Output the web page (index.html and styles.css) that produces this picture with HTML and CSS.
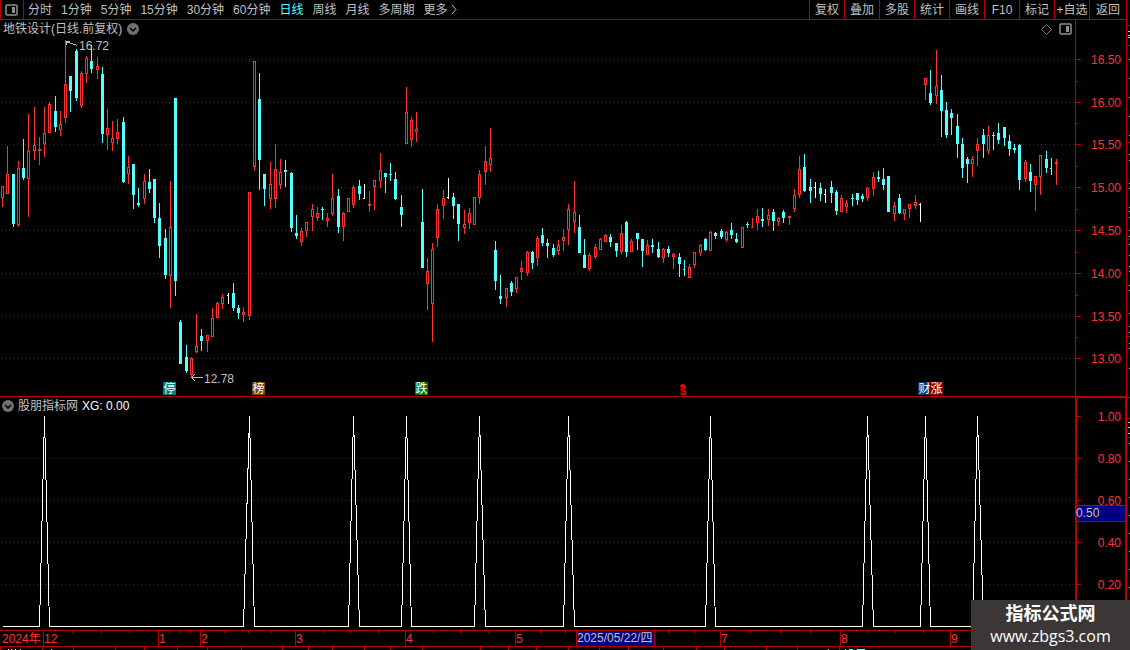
FILE: index.html
```html
<!DOCTYPE html>
<html lang="zh-CN">
<head>
  <meta charset="UTF-8">
  <title>地铁设计 日线</title>
  <link rel="stylesheet" href="styles.css">
</head>
<body>
  <div class="workspace">
    <header class="toolbar">
      <button class="layout-btn" aria-label="侧栏">
        <svg width="13" height="12"><rect x="1" y="1" width="11" height="10" rx="1" class="icon-line"/><rect x="7" y="3" width="3" height="6" class="icon-fill"/></svg>
      </button>
      <nav class="periods">
        <button>分时</button>
        <button>1分钟</button>
        <button>5分钟</button>
        <button>15分钟</button>
        <button>30分钟</button>
        <button>60分钟</button>
        <button class="active">日线</button>
        <button>周线</button>
        <button>月线</button>
        <button>多周期</button>
        <button class="more">更多<svg width="6" height="11"><path d="M1 1L5 5.5L1 10" class="more-arrow"/></svg></button>
      </nav>
      <div class="tools">
        <button>复权</button>
        <button>叠加</button>
        <button>多股</button>
        <button>统计</button>
        <button>画线</button>
        <button>F10</button>
        <button>标记</button>
        <button>+自选</button>
        <button class="last">返回</button>
      </div>
    </header>

    <section class="row price-row">
      <div class="panel">
        <div class="panel-head">
          <h1>地铁设计(日线.前复权)</h1>
          <button aria-label="展开"><svg width="12" height="12"><circle cx="6" cy="6" r="6" class="dot"/><path d="M3 5L6 8L9 5" class="dot-arrow"/></svg></button>
          <span class="head-icons">
            <button aria-label="标志"><svg width="11" height="11"><path d="M5.5 0.5L10.5 5.5L5.5 10.5L0.5 5.5Z" class="diamond"/></svg></button>
            <button aria-label="面板"><svg width="13" height="12"><rect x="1" y="1" width="11" height="10" rx="1" class="icon-line"/><rect x="7" y="3" width="3" height="6" class="icon-fill"/></svg></button>
          </span>
        </div>
        <svg class="plot price-plot" id="price"></svg>
      </div>
      <svg class="axis" id="priceAxis" width="51" height="376"></svg>
    </section>

    <section class="row signal-row">
      <div class="panel">
        <div class="panel-head">
          <button aria-label="展开"><svg width="12" height="12"><circle cx="6" cy="6" r="6" class="dot"/><path d="M3 5L6 8L9 5" class="dot-arrow"/></svg></button>
          <h2>股朋指标网</h2>
          <span class="value">XG: 0.00</span>
        </div>
        <svg class="plot signal-plot" id="signal"></svg>
      </div>
      <svg class="axis" id="signalAxis" width="51" height="233"></svg>
    </section>

    <svg class="timeline" id="timeline"></svg>
    <svg class="ticker" id="ticker"></svg>
  </div>
  <svg class="edge" id="edge"></svg>

  <div class="watermark">
    <strong>指标公式网</strong>
    <span>www.zbgs3.com</span>
  </div>

  <script src="chart.js"></script>
</body>
</html>
```
FILE: styles.css
```css
body {
  margin: 0;
  display: flex;
  height: 100vh;
  overflow: hidden;
  background: #000;
  color: #c0c0c0;
  font-family: "Liberation Sans", "Noto Sans CJK SC", sans-serif;
  font-size: 12px;
  line-height: 18px;
}
button {
  display: flex;
  align-items: center;
  padding: 0;
  border: none;
  background: none;
  color: inherit;
  font: inherit;
  white-space: nowrap;
  cursor: pointer;
}
svg {
  display: block;
  overflow: visible;
  shape-rendering: crispEdges;
}
h1, h2 {
  margin: 0;
  font-size: 12px;
  font-weight: 400;
}
.workspace {
  flex: 1;
  min-width: 0;
}

/* toolbar */
.toolbar {
  display: flex;
  height: 19px;
  border-bottom: 1px solid #b40000;
}
.layout-btn {
  width: 24px;
  box-sizing: border-box;
  padding-left: 4px;
  border-left: 1px solid #b40000;
  border-right: 1px solid #b40000;
}
.periods {
  display: flex;
  flex: 1;
  gap: 9px;
  padding-left: 4px;
}
.active {
  color: #54ffff;
}
.more {
  gap: 3px;
}
.tools {
  display: flex;
}
.tools button {
  width: 35px;
  box-sizing: border-box;
  justify-content: center;
  border-left: 1px solid #b40000;
}
.tools .last {
  width: 37px;
}
.icon-line {
  fill: none;
  stroke: #909090;
  stroke-width: 1.5;
  shape-rendering: auto;
}
.icon-fill {
  fill: #909090;
}
.more-arrow {
  fill: none;
  stroke: #c0c0c0;
  shape-rendering: auto;
}

/* panels */
.row {
  display: flex;
}
.price-row {
  border-bottom: 1px solid #b40000;
}
.panel {
  flex: 1;
  min-width: 0;
}
.panel-head {
  display: flex;
  align-items: center;
  gap: 5px;
  height: 18px;
  padding: 0 3px;
}
.signal-row .panel-head {
  height: 17px;
  padding: 0 2px;
  gap: 4px;
}
.head-icons {
  display: flex;
  gap: 7px;
  margin-left: auto;
}
.value {
  color: #fff;
}
.dot {
  fill: #707070;
  shape-rendering: auto;
}
.dot-arrow {
  fill: none;
  stroke: #000;
  stroke-width: 1.5;
  shape-rendering: auto;
}
.diamond {
  fill: none;
  stroke: #808080;
  shape-rendering: auto;
}
.plot {
  width: 100%;
}
.price-plot {
  height: 358px;
}
.signal-plot {
  height: 216px;
}
.axis {
  flex: none;
}

/* chart parts */
.grid {
  stroke: #a00000;
  stroke-dasharray: 1 3;
}
.rule {
  fill: #b40000;
}
.up {
  fill: #ff3232;
}
.hollow {
  fill: #000;
}
.down {
  fill: #54ffff;
}
.flat {
  fill: #fff;
}
.spikes {
  fill: none;
  stroke: #fff;
}
.scale {
  fill: #ff3232;
  text-anchor: end;
}
.month {
  fill: #ff3232;
}
.note {
  fill: #c0c0c0;
}
.note-line {
  fill: none;
  stroke: #c0c0c0;
}
.cursor {
  fill: #000080;
}
.tag {
  fill: #fff;
  text-anchor: middle;
}
.money {
  fill: #f00;
  font: bold 11px "Liberation Sans", sans-serif;
  text-anchor: middle;
}

.timeline {
  width: 100%;
  height: 17px;
}
.ticker {
  width: 100%;
  height: 3px;
}
.edge {
  flex: none;
  width: 4px;
  height: 100%;
}

.watermark {
  position: absolute;
  right: 0;
  bottom: 0;
  width: 159px;
  height: 50px;
  background: #3c3737;
  color: #fff;
  display: flex;
  flex-direction: column;
  align-items: center;
}
.watermark strong {
  font-size: 18px;
  line-height: 28px;
}
.watermark span {
  font-family: "Open Sans", sans-serif;
  font-size: 16px;
  line-height: 17px;
}
```
FILE: chart.js
```js
// x, high, body top, body bottom, low, kind (u = up, d = down, w = unchanged, t = down with a tick, r = up with a tick)
const candles = `
2 186 186 198 207 u|7 146 174 194 194 u|13 174 174 224 227 d|18 161 168 225 227 u|23 139 168 178 180 d
28 114 151 179 217 u|34 107 145 151 160 u|39 137 149 151 165 u|44 107 133 144 157 u|49 102 104 133 133 u
55 96 111 127 132 d|60 111 124 130 136 u|65 40 84 118 123 u|70 76 76 91 112 d|76 49 51 98 101 d
81 71 73 106 108 u|86 56 58 74 83 u|91 45 61 69 73 d|97 57 66 70 79 u|102 67 74 134 143 d
107 109 128 135 150 u|112 121 138 143 151 u|117 119 132 139 144 u|123 117 122 182 183 d|128 156 167 174 184 u
133 164 164 195 209 d|138 188 203 205 207 d|144 174 181 199 204 u|149 169 182 189 193 d|154 179 179 218 223 d
159 203 218 246 258 d|165 229 238 275 279 d|170 181 227 276 308 u|175 98 98 281 296 d|180 320 322 364 364 d
186 345 357 371 373 d|191 357 358 375 377 u|196 314 346 352 353 u|201 329 336 341 351 d|207 335 335 341 352 u
212 308 318 337 337 u|217 302 303 318 318 u|222 294 297 304 309 u|228 293 295 296 304 w|233 283 293 308 311 d
238 305 308 313 319 d|243 307 312 315 322 u|249 192 192 316 320 u|254 61 61 167 171 u|259 73 99 160 190 d
264 174 174 189 206 d|270 162 184 199 209 u|275 144 169 199 208 u|280 159 172 185 189 u|285 160 170 172 187 d
291 172 173 228 232 d|296 215 233 236 239 d|301 228 231 242 246 u|306 222 222 231 237 u|312 204 209 217 231 u
317 207 213 218 221 u|322 207 209 210 220 d|327 213 218 221 227 u|332 174 198 214 216 u|338 189 196 227 233 d
343 212 213 227 241 u|348 198 198 212 212 u|353 185 187 205 208 u|359 180 186 194 200 d|364 184 198 199 199 w
369 191 204 206 212 u|374 180 180 187 210 u|380 153 170 181 188 u|385 173 173 177 193 d|390 163 174 175 181 d
395 172 179 199 200 d|401 195 207 215 227 d|406 87 112 144 144 u|411 117 120 140 147 u|416 112 129 132 142 u
422 189 222 268 268 d|427 258 271 284 310 u|432 243 249 304 342 u|437 204 209 238 247 u|443 190 198 206 219 u
448 178 197 198 199 w|453 193 197 206 219 d|458 204 204 224 241 d|464 210 224 228 234 u|469 208 213 223 229 u
474 197 197 225 225 u|479 170 174 198 204 u|485 146 161 172 185 u|490 128 158 165 172 u|495 241 250 281 290 d
500 275 296 299 304 d|506 288 288 298 307 u|511 281 283 292 296 d|516 277 277 289 293 u|521 261 268 272 280 u
527 251 252 273 276 u|532 251 252 263 269 d|537 236 238 258 266 u|542 228 235 243 246 d|547 239 243 246 258 d
553 244 248 255 257 d|558 240 245 251 255 u|563 229 237 241 251 u|568 204 209 230 245 u|574 181 212 222 233 u
579 215 227 253 253 d|584 239 255 268 268 d|589 253 255 269 271 u|595 244 247 257 259 u|600 238 239 250 250 u
605 234 235 242 242 u|610 234 237 242 247 d|616 243 243 251 257 d|621 225 233 252 254 u|626 221 222 252 257 d
631 239 241 252 252 u|637 233 233 239 250 d|642 239 239 251 267 d|647 240 245 255 255 u|652 239 245 247 253 d
658 242 249 257 258 d|663 248 249 258 263 u|668 246 249 253 257 d|673 253 254 257 269 u|679 253 257 264 277 d
684 260 269 270 276 t|689 264 267 278 278 u|694 252 252 265 268 u|700 244 245 253 256 u|705 238 239 250 251 d
710 231 232 251 251 u|715 232 233 236 239 d|721 229 231 237 239 d|726 231 232 240 242 u|731 223 230 235 239 d
736 233 239 242 243 d|742 227 227 248 248 u|747 222 224 225 228 d|752 218 227 228 228 r|757 209 216 223 230 u
762 208 219 221 227 d|768 209 215 220 226 u|773 209 212 221 231 d|778 217 218 222 226 u|783 210 212 218 223 d
789 216 216 218 225 u|794 189 195 209 212 u|799 156 169 195 198 u|804 154 167 191 192 d|810 179 187 191 203 d
815 182 187 188 198 w|820 183 188 194 201 d|825 189 194 195 203 w|831 181 187 193 203 d|836 190 192 211 215 d
841 195 198 212 212 u|846 200 203 207 213 u|852 194 198 199 206 d|857 193 193 200 205 d|862 194 196 199 202 d
867 187 188 198 201 u|873 172 177 189 196 u|878 171 177 179 182 d|883 168 179 185 190 d|888 176 176 212 212 d
894 202 206 214 221 u|899 194 198 213 214 d|904 209 209 214 220 u|909 204 204 209 218 u|915 195 202 206 209 u
920 203 204 205 222 w|925 78 78 85 100 u|930 70 93 103 105 d|936 50 86 96 104 u|941 75 90 111 137 d
946 102 110 135 138 d|951 109 113 118 135 d|957 114 126 144 158 d|962 138 144 168 178 d|967 157 159 164 183 d
972 156 159 164 177 u|977 138 144 151 166 u|983 129 135 144 158 d|988 126 135 151 154 u|993 132 135 136 150 d
998 123 133 140 144 d|1004 127 127 138 146 d|1009 135 141 149 156 d|1014 144 148 150 153 d|1019 144 145 180 190 d
1025 160 162 179 182 u|1030 164 172 181 192 d|1035 176 176 185 211 u|1040 155 155 177 195 u|1046 151 159 168 173 d
1051 158 168 169 175 t|1056 159 162 164 185 u`
  .trim().split(/[|\n]/).map(row => {
    const p = row.split(" ");
    return { x: +p[0], high: +p[1], top: +p[2], bottom: +p[3], low: +p[4], kind: p[5] };
  });

const signals = [44, 249, 353, 406, 479, 568, 710, 867, 925, 977];

const rect = (x, y, w, h, cls) => `<rect x="${x}" y="${y}" width="${w}" height="${h}" class="${cls}"/>`;
const text = (x, y, s, cls) => `<text x="${x}" y="${y}" class="${cls}">${s}</text>`;
const gridLine = y => `<line x1="1" x2="100%" y1="${y + 0.5}" y2="${y + 0.5}" class="grid"/>`;

function draw(id, top, html) {
  document.getElementById(id).innerHTML = `<g transform="translate(0 ${-top})">${html}</g>`;
}

function drawCandle(c) {
  const cls = { u: "up", r: "up", d: "down", t: "down", w: "flat" }[c.kind];
  let out = rect(c.x, c.high, 1, c.low - c.high, cls);
  if ("wtr".includes(c.kind)) {
    return out + rect(c.x - 1, c.top, 1, 1, cls);
  }
  out += rect(c.x - 1, c.top, 3, c.bottom - c.top, cls);
  if (c.kind === "u" && c.bottom - c.top > 2) {
    out += rect(c.x, c.top + 1, 1, c.bottom - c.top - 2, "hollow");
  }
  return out;
}

// price panel
const priceLevels = [59, 102, 144, 187, 230, 273, 316, 358];
const priceNames = ["16.50", "16.00", "15.50", "15.00", "14.50", "14.00", "13.50", "13.00"];
const tags = [
  [163, "停", "#008080"], [252, "榜", "#804000"], [415, "跌", "#008000"],
  [918, "财", "#003870"], [930, "涨", "#800000"]
];

draw("price", 38,
  priceLevels.map(gridLine).join("") +
  candles.map(drawCandle).join("") +
  '<path d="M77 45.5L66 41.5M66 45V41.5H70" class="note-line"/>' + text(79, 50, "16.72", "note") +
  '<path d="M203 377.5H191M195 374L191.500 377.500L195 381" class="note-line"/>' + text(204, 383, "12.78", "note") +
  tags.map(([x, s, color]) =>
    `<rect x="${x}" y="382" width="13" height="13" fill="${color}"/>` + text(x + 6.5, 393, s, "tag")).join("") +
  '<path d="M680 387L683 383L686 387Z" fill="#f00"/>' + text(683, 395, "$", "money"));

draw("priceAxis", 20,
  rect(0, 20, 1, 376, "rule") +
  priceLevels.map((y, i) => rect(1, y, 5, 1, "rule") + text(46, y + 5, priceNames[i], "scale")).join("") +
  [81, 123, 166, 209, 252, 295, 337].map(y => rect(1, y, 2, 1, "rule")).join(""));

// signal panel
const points = ["2.5,626.5"];
signals.forEach(x => {
  const i = candles.findIndex(c => c.x === x);
  points.push(`${candles[i - 1].x + 0.5},626.5`, `${x + 0.5},416.5`, `${candles[i + 1].x + 0.5},626.5`);
});
points.push("1056.5,626.5");

draw("signal", 414,
  [458, 500, 542, 584].map(gridLine).join("") +
  `<polyline points="${points.join(" ")}" class="spikes"/>`);

draw("signalAxis", 397,
  rect(0, 397, 51, 1, "rule") + rect(0, 397, 2, 233, "rule") + rect(50, 397, 1, 233, "rule") +
  [416, 458, 500, 542, 584].map((y, i) =>
    rect(2, y, 4, 1, "rule") + text(46, y + 5, (1 - i * 0.2).toFixed(2), "scale")).join("") +
  [437, 479, 521, 563, 605].map(y => rect(2, y, 1, 1, "rule")).join("") +
  rect(2, 505, 48, 17, "rule") + rect(2, 506, 48, 15, "cursor") + text(1, 517, "0.50", "note"));

// time axis
const months = [[43, "12"], [158, "1"], [200, "2"], [295, "3"], [405, "4"], [515, "5"], [720, "7"], [840, "8"], [950, "9"]];
const weeks = [72, 101, 129, 169, 179, 190, 224, 248, 271, 323, 350, 378, 433, 460, 488, 540, 565, 668, 694, 750, 780, 810, 867, 895, 923];

draw("timeline", 0,
  rect(0, 0, "100%", 1, "rule") + rect(0, 16, "100%", 1, "rule") +
  text(2, 13, "2024年", "month") +
  months.map(([x, s]) => rect(x, 1, 1, 15, "rule") + text(x + 1, 13, s, "month")).join("") +
  weeks.map(x => rect(x, 1, 1, 2, "rule")).join("") +
  rect(576, 1, 79, 15, "rule") + rect(577, 1, 77, 15, "cursor") + text(577, 12, "2025/05/22/四", "note"));

draw("ticker", 0,
  [0, 42, 73, 115, 144, 177, 207, 241, 282, 308, 332, 364, 390, 422, 480, 508, 536, 568, 599, 628, 663, 696, 724, 766, 797, 839]
    .map(x => rect(x, 0, 1, 3, "rule")).join("") +
  [8, 11, 15, 20, 51, 828, 845].map(x => rect(x, 2, 1, 1, "flat")).join("") +
  rect(849, 2, 4, 1, "down") + rect(857, 2, 8, 1, "down"));

// strip of the neighbouring quote panel
const marks = [59, 78, 97, 116, 135, 154, 160, 183, 188, 207, 211, 217, 230, 236, 244, 255, 266, 271, 285, 290, 313, 326, 332,
  343, 348, 368, 443, 461, 479, 497, 515, 533, 551, 569, 587];

draw("edge", 0,
  rect(0, 0, 1, "100%", "rule") +
  [25, 45, 142, 239, 336, 397, 418, 437].map(y => rect(1, y, 3, 1, "rule")).join("") +
  [31, 35, 37, 422, 427, 433].map(y => rect(2, y, 2, 1, "note")).join("") +
  marks.map(y => rect(3, y, 1, 1, "note")).join(""));
```
